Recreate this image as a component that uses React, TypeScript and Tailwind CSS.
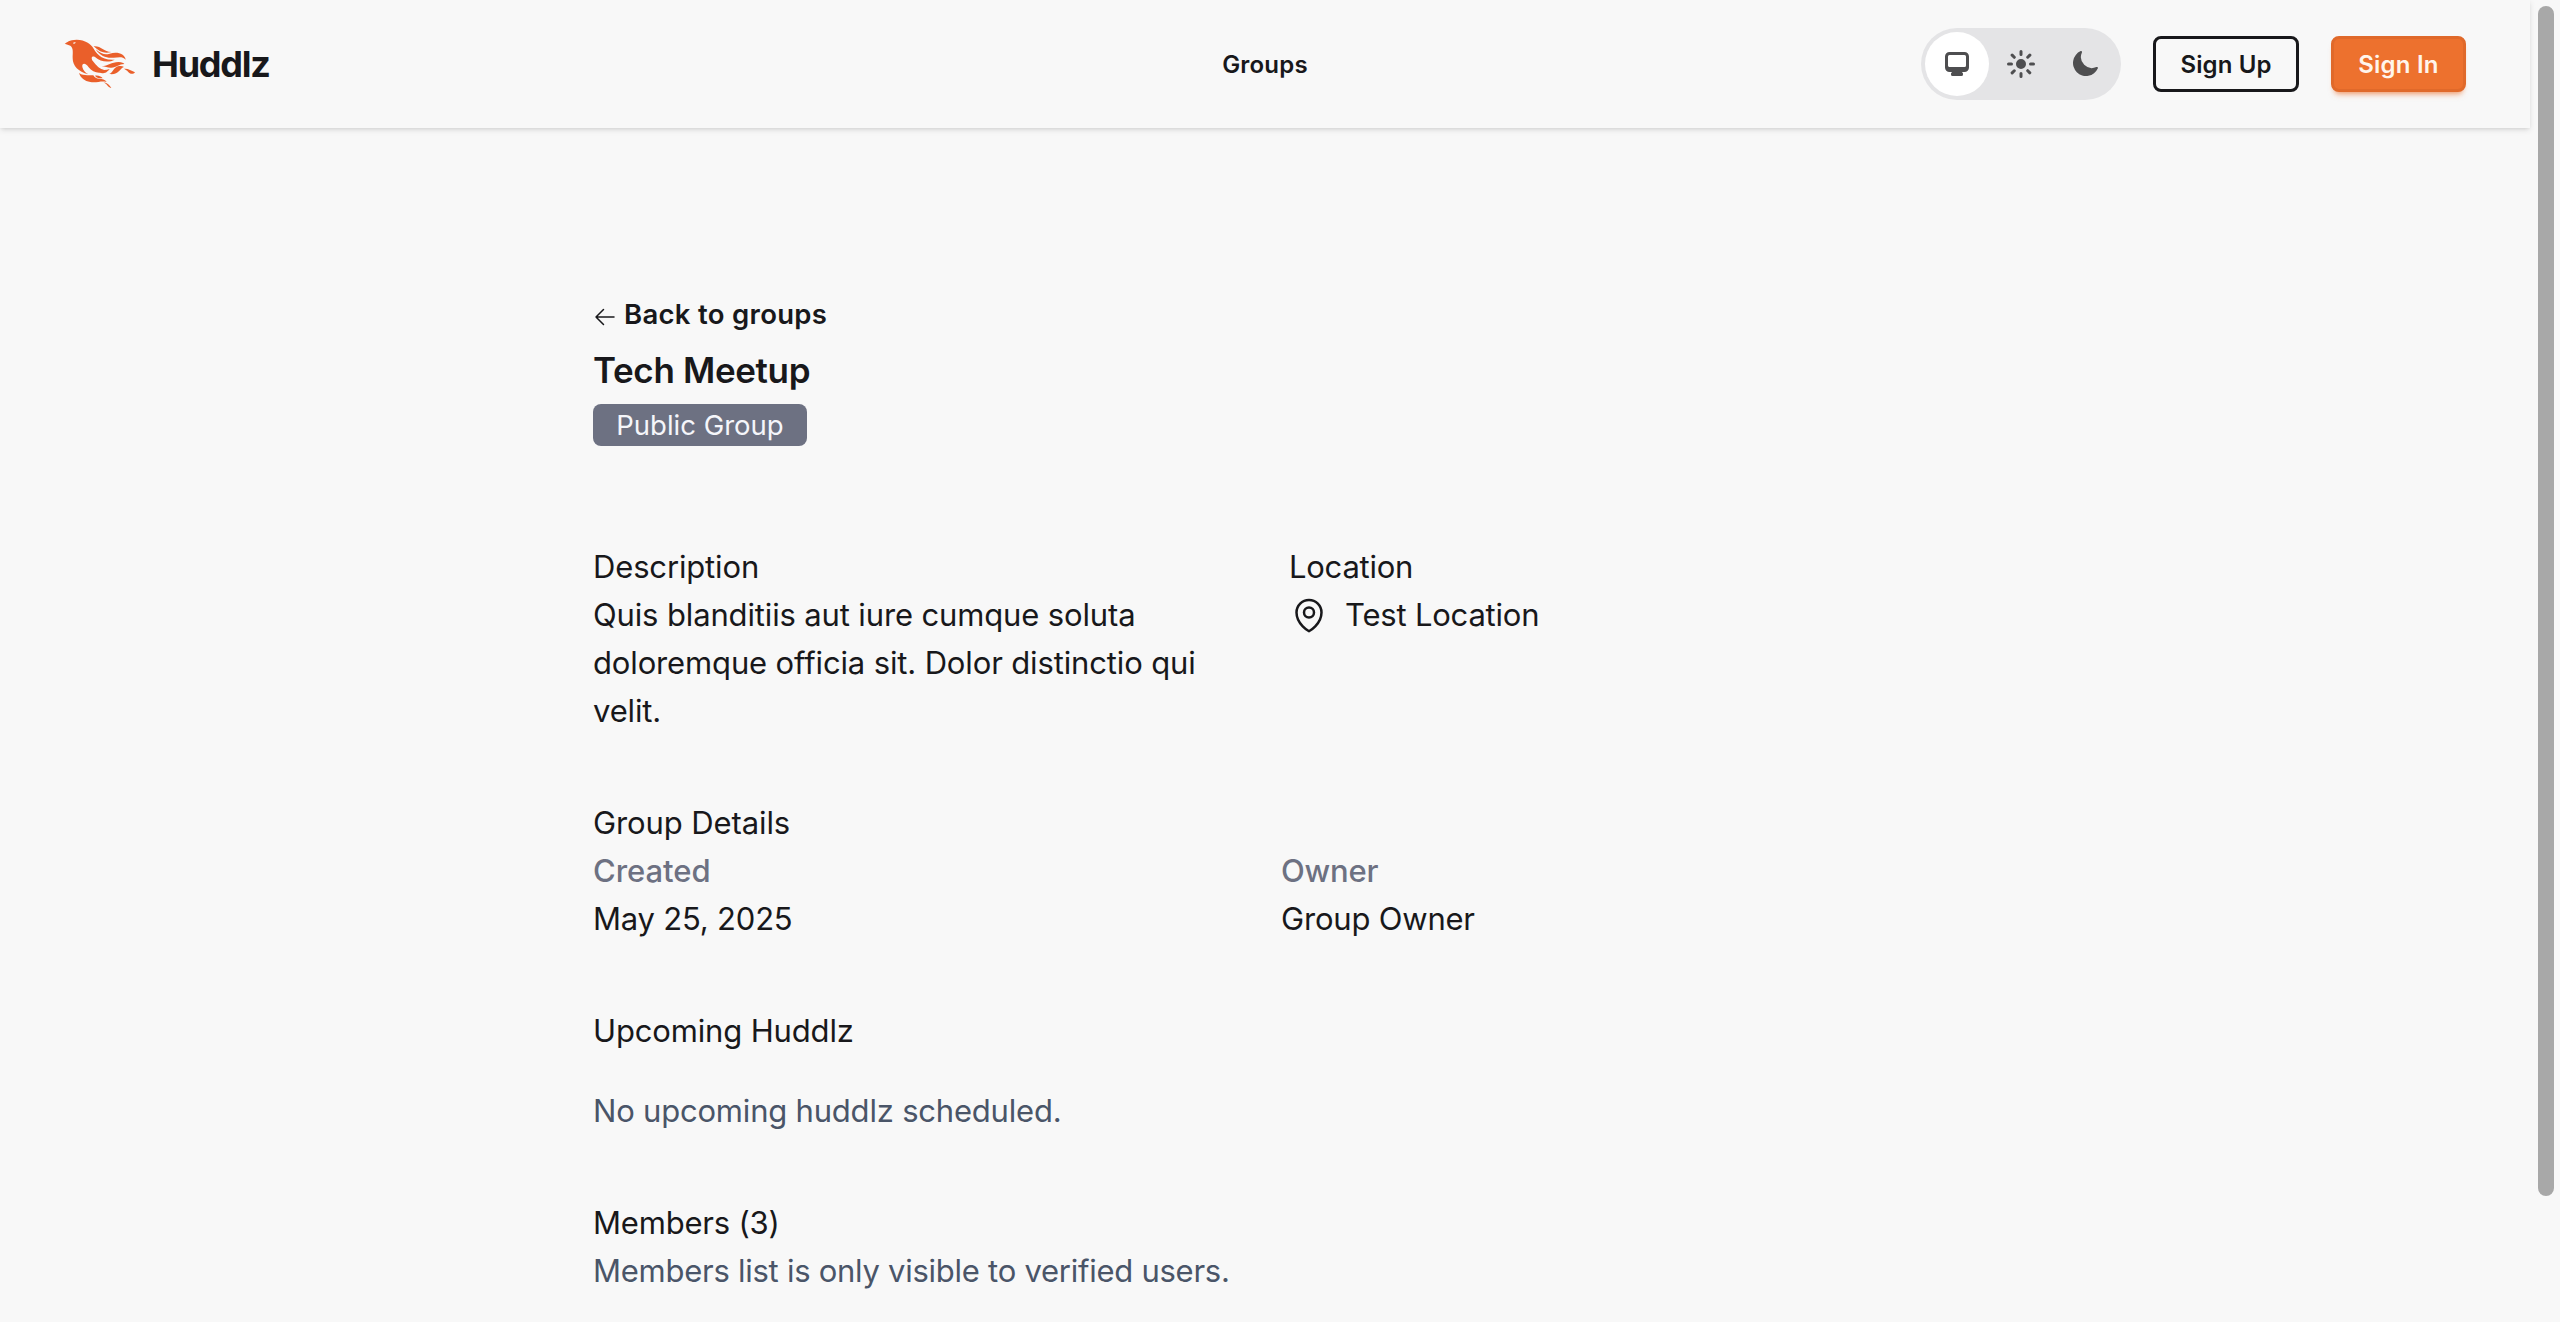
import type { ReactNode } from "react";

function HuddlzLogo() {
  return (
    <svg viewBox="72 57 216 150" className="h-[50px] w-[72px] fill-[#ea5f2a]" aria-hidden="true">
      <path
        fillRule="evenodd"
        d="M74 71C82 68 86 60 110 59.500C136 60 152 72 161 86C168 97 182 122 224 119C208 128 182 127 165 111C155 106 152 114 159 124C169 136 178 148 196 151C182 164 158 158 146 142C138 128 125 127 127 141C129 150 136 158 145 163C115 156 98 137 98 115C98 98 101 84 91 77C86 74 80 74 74 71ZM98 69C102 73 107 70 107 67C104 66 101 69 98 69Z"
      />
      <path d="M161 79C183 77 190 95 214 96C196 102 179 97 161 79Z" />
      <path d="M167 88C184 103 196 105 209 101C232 94 254 101 257 119C247 108 234 113 221 113C202 115 182 111 167 88Z" />
      <path d="M185 139C205 138 213 126 236 126C246 126 251 129 253 132C237 132 228 144 212 143C203 143 195 140 185 139Z" />
      <path d="M170 145C186 152 198 151 209 147C201 157 196 160 186 160C179 159 174 154 170 145Z" />
      <path d="M208 162C220 157 220 141 237 138C243 137 248 138 252 141C240 144 236 166 208 162Z" />
      <path d="M252 146C266 145 272 151 285 157C279 165 268 161 264 155C261 151 257 149 252 146Z" />
      <path d="M117 159C131 169 145 164 160 166C164 173 169 176 178 176C186 176 196 178 200 186C185 181 171 189 151 186C134 183 122 174 117 159Z" />
      <path d="M165 167C174 165 186 170 188 175C178 175 170 174 165 167Z" />
      <path d="M191 187C202 188 209 196 214 204C205 204 203 194 191 187Z" />
    </svg>
  );
}

function MicroIcon({ d }: { d: string }) {
  return (
    <span className="flex size-16 items-center justify-center">
      <svg viewBox="0 0 16 16" className="size-8 fill-[#4e4e50]" aria-hidden="true">
        <path fillRule="evenodd" clipRule="evenodd" d={d} />
      </svg>
    </span>
  );
}

const desktopPath =
  "M2 4.25A2.25 2.25 0 0 1 4.25 2h7.5A2.25 2.25 0 0 1 14 4.25v5.5A2.25 2.25 0 0 1 11.75 12h-1.312c.1.128.21.248.328.36a.75.75 0 0 1 .234.545v.345a.75.75 0 0 1-.75.75h-4.5a.75.75 0 0 1-.75-.75v-.345a.75.75 0 0 1 .234-.545c.118-.111.228-.232.328-.36H4.25A2.25 2.25 0 0 1 2 9.75v-5.5Zm2.25-.75a.75.75 0 0 0-.75.75v4.5c0 .414.336.75.75.75h7.5a.75.75 0 0 0 .75-.75v-4.5a.75.75 0 0 0-.75-.75h-7.5Z";
const sunPath =
  "M8 1a.75.75 0 0 1 .75.75v1.5a.75.75 0 0 1-1.5 0v-1.5A.75.75 0 0 1 8 1ZM10.5 8a2.5 2.5 0 1 1-5 0 2.5 2.5 0 0 1 5 0ZM12.95 4.11a.75.75 0 1 0-1.06-1.06l-1.062 1.06a.75.75 0 0 0 1.061 1.062l1.06-1.061ZM15 8a.75.75 0 0 1-.75.75h-1.5a.75.75 0 0 1 0-1.5h1.5A.75.75 0 0 1 15 8ZM11.89 12.95a.75.75 0 0 0 1.06-1.06l-1.06-1.062a.75.75 0 0 0-1.062 1.061l1.061 1.06ZM8 12a.75.75 0 0 1 .75.75v1.5a.75.75 0 0 1-1.5 0v-1.5A.75.75 0 0 1 8 12ZM5.172 11.89a.75.75 0 0 0-1.061-1.062L3.05 11.89a.75.75 0 1 0 1.06 1.06l1.06-1.06ZM4 8a.75.75 0 0 1-.75.75h-1.5a.75.75 0 0 1 0-1.5h1.5A.75.75 0 0 1 4 8ZM4.11 5.172A.75.75 0 0 0 5.173 4.11L4.11 3.05a.75.75 0 1 0-1.06 1.06l1.06 1.06Z";
const moonPath =
  "M14.438 10.148c.19-.425-.321-.787-.748-.601A5.5 5.5 0 0 1 6.453 2.31c.186-.427-.176-.938-.6-.748a6.501 6.501 0 1 0 8.585 8.586Z";

function Header() {
  return (
    <header className="grid h-32 shrink-0 grid-cols-[1fr_auto_1fr] items-center bg-[#f8f8f8] px-16 shadow-[0_2px_6px_rgba(0,0,0,0.1),0_2px_4px_-2px_rgba(0,0,0,0.12)]">
      <a className="flex items-center gap-4">
        <HuddlzLogo />
        <span className="text-[36px] leading-none font-bold tracking-[-1.25px]">Huddlz</span>
      </a>
      <a className="pt-0.5 text-[24px] font-semibold tracking-[0.2px]">Groups</a>
      <div className="flex items-center justify-end gap-8">
        <div className="flex rounded-full bg-[#e4e4e6] p-1">
          <span className="rounded-full bg-white">
            <MicroIcon d={desktopPath} />
          </span>
          <MicroIcon d={sunPath} />
          <MicroIcon d={moonPath} />
        </div>
        <button className="h-14 w-[146px] rounded-lg border-3 border-[#18181b] pt-0.5 text-[24px] leading-none font-semibold tracking-[0.1px] whitespace-nowrap">
          Sign Up
        </button>
        <button className="h-14 w-[135px] rounded-lg border-3 border-[#e0692a] bg-[#ed712e] pt-0.5 text-[24px] leading-none font-semibold tracking-[0.2px] whitespace-nowrap text-[#fff5ec] shadow-[0_6px_6px_-4px_rgba(237,113,46,0.5),0_4px_4px_-3px_rgba(237,113,46,0.4)]">
          Sign In
        </button>
      </div>
    </header>
  );
}

function Section({ title, children, className = "" }: { title: ReactNode; children: ReactNode; className?: string }) {
  return (
    <section className={className}>
      <h3>{title}</h3>
      {children}
    </section>
  );
}

export default function App() {
  return (
    <div className="flex h-[1322px] overflow-hidden bg-[#f8f8f8] font-['Inter',sans-serif] text-[31px] leading-[48px] text-[#18181b]">
      <div className="flex w-[2530px] flex-col">
        <Header />
        <main className="mx-auto mt-[162px] w-[1344px]">
          <a className="flex h-12 items-center gap-[7px] text-[27.5px] font-semibold tracking-[0.3px]">
            <svg
              viewBox="0 0 24 24"
              className="mt-1.5 size-6 fill-none stroke-[#18181b] stroke-[1.5]"
              strokeLinecap="round"
              strokeLinejoin="round"
              aria-hidden="true"
            >
              <path d="M10.5 19.5 3 12m0 0 7.500-7.500M3 12h18" />
            </svg>
            Back to groups
          </a>
          <h1 className="mt-2 text-[35px] leading-[48px] font-semibold tracking-[-0.35px]">Tech Meetup</h1>
          <div className="mt-[10px] flex h-[42px] w-[214px] items-center justify-center rounded-lg bg-[#6d7182] text-[27.5px] whitespace-nowrap text-[#f5f6fa]">
            Public Group
          </div>

          <div className="mt-[97px] grid grid-cols-2 gap-12">
            <Section title={<span className="tracking-[-0.15px]">Description</span>}>
              <p className="tracking-[-0.14px]">
                Quis blanditiis aut iure cumque soluta doloremque officia sit. Dolor distinctio qui velit.
              </p>
            </Section>
            <Section title={<span className="tracking-[-0.25px]">Location</span>}>
              <p className="flex items-center gap-4 tracking-[-0.2px]">
                <svg
                  viewBox="0 0 24 24"
                  className="size-10 fill-none stroke-[#18181b] stroke-[1.5]"
                  strokeLinecap="round"
                  strokeLinejoin="round"
                  aria-hidden="true"
                >
                  <path d="M15 10.5a3 3 0 1 1-6 0 3 3 0 0 1 6 0Z" />
                  <path d="M19.5 10.5c0 7.142-7.5 11.25-7.5 11.25S4.5 17.642 4.5 10.5a7.5 7.5 0 1 1 15 0Z" />
                </svg>
                Test Location
              </p>
            </Section>
          </div>

          <Section title={<span className="tracking-[-0.1px]">Group Details</span>} className="mt-16">
            <dl className="grid grid-cols-2 gap-8 tracking-[-0.2px]">
              <div>
                <dt className="font-medium tracking-[-0.05px] text-[#6d7182]">Created</dt>
                <dd>May 25, 2025</dd>
              </div>
              <div>
                <dt className="font-medium text-[#6d7182]">Owner</dt>
                <dd>Group Owner</dd>
              </div>
            </dl>
          </Section>

          <Section title={<span className="tracking-[-0.15px]">Upcoming Huddlz</span>} className="mt-16">
            <p className="mt-8 tracking-[-0.2px] text-[#4a5568]">No upcoming huddlz scheduled.</p>
          </Section>

          <Section title={<span className="tracking-[-0.2px]">Members (3)</span>} className="mt-16">
            <p className="tracking-[-0.26px] text-[#4a5568]">Members list is only visible to verified users.</p>
          </Section>
        </main>
      </div>
      <div className="flex w-[30px] justify-center pt-1.5 pl-0.5">
        <div className="h-[1190px] w-4 rounded-full bg-[#a8a8a8]" />
      </div>
    </div>
  );
}
